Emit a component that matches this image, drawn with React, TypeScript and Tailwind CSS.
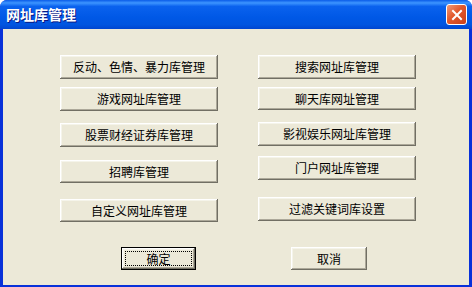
type Btn = { label: string; cls: string };

const LEFT: Btn[] = [
  { label: "反动、色情、暴力库管理", cls: "mt-0 h-[24px]" },
  { label: "游戏网址库管理", cls: "mt-[8px] h-[24px]" },
  { label: "股票财经证券库管理", cls: "mt-[12px] h-[24px]" },
  { label: "招聘库管理", cls: "mt-[13px] h-[23px]" },
  { label: "自定义网址库管理", cls: "mt-[16px] h-[23px]" },
];

const RIGHT: Btn[] = [
  { label: "搜索网址库管理", cls: "mt-0 h-[24px]" },
  { label: "聊天库网址管理", cls: "mt-[8px] h-[23px]" },
  { label: "影视娱乐网址库管理", cls: "mt-[12px] h-[24px]" },
  { label: "门户网址库管理", cls: "mt-[10px] h-[24px]" },
  { label: "过滤关键词库设置", cls: "mt-[17px] h-[24px]" },
];

const BEVEL =
  "shadow-[inset_-1px_-1px_#716f64,inset_1px_1px_#ffffff,inset_-2px_-2px_#aca899,inset_2px_2px_#f5f4ea]";

function ClassicButton(props: { label: string; className: string }) {
  return (
    <button
      className={`flex items-center justify-center bg-[#ece9d8] text-[12px] leading-none text-black ${BEVEL} ${props.className}`}
    >
      {props.label}
    </button>
  );
}

function DefaultButton(props: { label: string }) {
  return (
    <button className="h-[23px] w-[75px] border border-black bg-[#ece9d8] p-0 text-[12px] leading-none text-black">
      <div className={`flex h-full w-full p-[3px] ${BEVEL}`}>
        <div className="flex flex-1 items-center justify-center border border-dotted border-black">
          {props.label}
        </div>
      </div>
    </button>
  );
}

function CloseButton() {
  return (
    <div className="flex h-[21px] w-[21px] items-center justify-center rounded-[3px] border border-white bg-[linear-gradient(135deg,#f09a78,#e2582c_45%,#c9401a)]">
      <svg width="12" height="12" viewBox="0 0 12 12">
        <path d="M2 2 L10 10 M10 2 L2 10" stroke="#fff" strokeWidth="2" strokeLinecap="square" />
      </svg>
    </div>
  );
}

export default function App() {
  return (
    <div
      className="flex h-[287px] w-[472px] flex-col overflow-hidden rounded-t-[7px] bg-[#0831d9]"
      style={{ fontFamily: '"Noto Sans CJK SC", "Noto Sans", sans-serif' }}
    >
      {/* title bar */}
      <div className="flex h-[29px] shrink-0 items-center justify-between bg-[linear-gradient(to_bottom,#0a5ce8,#3d95ff_10%,#0a62ee_22%,#0058e6_60%,#0055e0_85%,#0046d0)] pl-[6px] pr-[5px]">
        <span className="text-[14px] font-bold text-white [text-shadow:1px_1px_0_#0a1883]">网址库管理</span>
        <CloseButton />
      </div>

      {/* dialog body */}
      <div className="mx-[3px] mb-[2px] flex flex-1 flex-col bg-[#ece9d8] pt-[26px]">
        <div className="flex gap-[40px] pl-[57px]">
          <div className="flex flex-col">
            {LEFT.map((b) => (
              <ClassicButton key={b.label} label={b.label} className={`w-[158px] ${b.cls}`} />
            ))}
          </div>
          <div className="flex flex-col">
            {RIGHT.map((b) => (
              <ClassicButton key={b.label} label={b.label} className={`w-[158px] ${b.cls}`} />
            ))}
          </div>
        </div>

        <div className="mt-[25px] flex gap-[95px] pl-[118px]">
          <DefaultButton label="确定" />
          <ClassicButton label="取消" className="h-[23px] w-[76px]" />
        </div>
      </div>
    </div>
  );
}
